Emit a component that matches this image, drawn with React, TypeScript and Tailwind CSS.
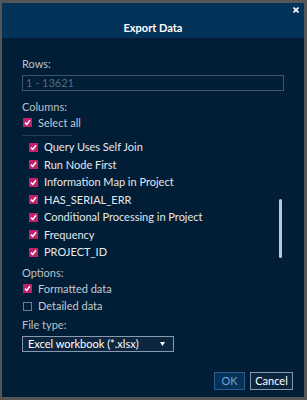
const font = { fontFamily: "Lato, 'Open Sans', sans-serif" };

type BoxProps = { checked?: boolean };

const Box = ({ checked }: BoxProps) =>
  checked ? (
    <span className="flex h-[9px] w-[9px] shrink-0 items-center justify-center bg-[#c3206a]">
      <svg width="7" height="7" viewBox="0 0 7 7">
        <path d="M1 3.6 L2.8 5.4 L6 1.2" stroke="#fff" strokeWidth="1.5" fill="none" />
      </svg>
    </span>
  ) : (
    <span className="h-[9px] w-[9px] shrink-0 border border-[#6d7f92] bg-transparent" />
  );

const Check = ({ label, checked = true, bright }: { label: string; checked?: boolean; bright?: boolean }) => (
  <div className="flex h-[17.5px] items-center gap-[6px]">
    <Box checked={checked} />
    <span className={bright ? "text-[11px] leading-[14px] text-[#e4e8ec]" : "text-[11px] leading-[14px] text-[#c3cad1]"}>
      {label}
    </span>
  </div>
);

const Label = ({ children, className = "" }: { children: string; className?: string }) => (
  <div className={"text-[11px] leading-[14px] text-[#b9c1c9] " + className}>{children}</div>
);

const columns = [
  "Query Uses Self Join",
  "Run Node First",
  "Information Map in Project",
  "HAS_SERIAL_ERR",
  "Conditional Processing in Project",
  "Frequency",
  "PROJECT_ID",
];

export default function App() {
  return (
    <div className="h-[400px] w-[307px] bg-[#565656] pl-[2px] pt-[3px]" style={font}>
      <div className="flex h-[394px] w-[302px] flex-col bg-[#021e36]">
        {/* header */}
        <div className="relative h-[35px] bg-[#04335a] pt-[19px] text-center">
          <div className="text-[11px] font-bold leading-[12px] text-white">Export Data</div>
          <svg className="absolute right-[5px] top-[4px]" width="6" height="6" viewBox="0 0 6 6">
            <path d="M0.5 0.5 L5.5 5.5 M5.5 0.5 L0.5 5.5" stroke="#fff" strokeWidth="1.6" />
          </svg>
        </div>

        <div className="flex flex-1 flex-col px-[20px]">
          <Label className="mt-[19px]">Rows:</Label>
          <div className="mt-[4px] flex h-[16px] w-[262px] items-center border border-[#3c5670] px-[3px] text-[11px] leading-[14px] text-[#566b80]">
            1 - 13621
          </div>

          <Label className="mt-[9px]">Columns:</Label>
          <div className="pl-[1px]">
            <Check label="Select all" />
          </div>
          <div className="mt-[3px] h-px w-[50px] bg-[#243c55]" />

          <div className="relative mt-[3px] pl-[7px]">
            {columns.map((c) => (
              <Check key={c} label={c} bright />
            ))}
            <div className="absolute right-[2px] top-[60px] h-[59px] w-[3px] rounded-sm bg-[#b9c8d6]" />
          </div>

          <Label className="mt-[5px]">Options:</Label>
          <div className="pl-[1px]">
            <Check label="Formatted data" />
            <Check label="Detailed data" checked={false} />
          </div>

          <Label className="mt-[3px]">File type:</Label>
          <div className="mt-[4px] flex h-[16px] w-[152px] items-center justify-between border border-[#8799ac] bg-[#0d2640] pl-[5px] pr-[8px]">
            <span className="text-[11px] leading-[14px] text-white">Excel workbook (*.xlsx)</span>
            <svg width="5" height="4" viewBox="0 0 5 4">
              <path d="M0 0 H5 L2.5 4 Z" fill="#fff" />
            </svg>
          </div>

          <div className="mt-[20px] flex justify-end gap-[5px]">
            <button className="h-[18px] w-[31px] border border-[#255f92] bg-[#073155] text-[11px] leading-[14px] text-[#6aa6da]">
              OK
            </button>
            <button className="-mr-[9px] h-[18px] w-[43px] border border-[#8799ac] bg-[#0d2640] text-[11px] leading-[14px] text-white">
              Cancel
            </button>
          </div>
        </div>
      </div>
    </div>
  );
}
